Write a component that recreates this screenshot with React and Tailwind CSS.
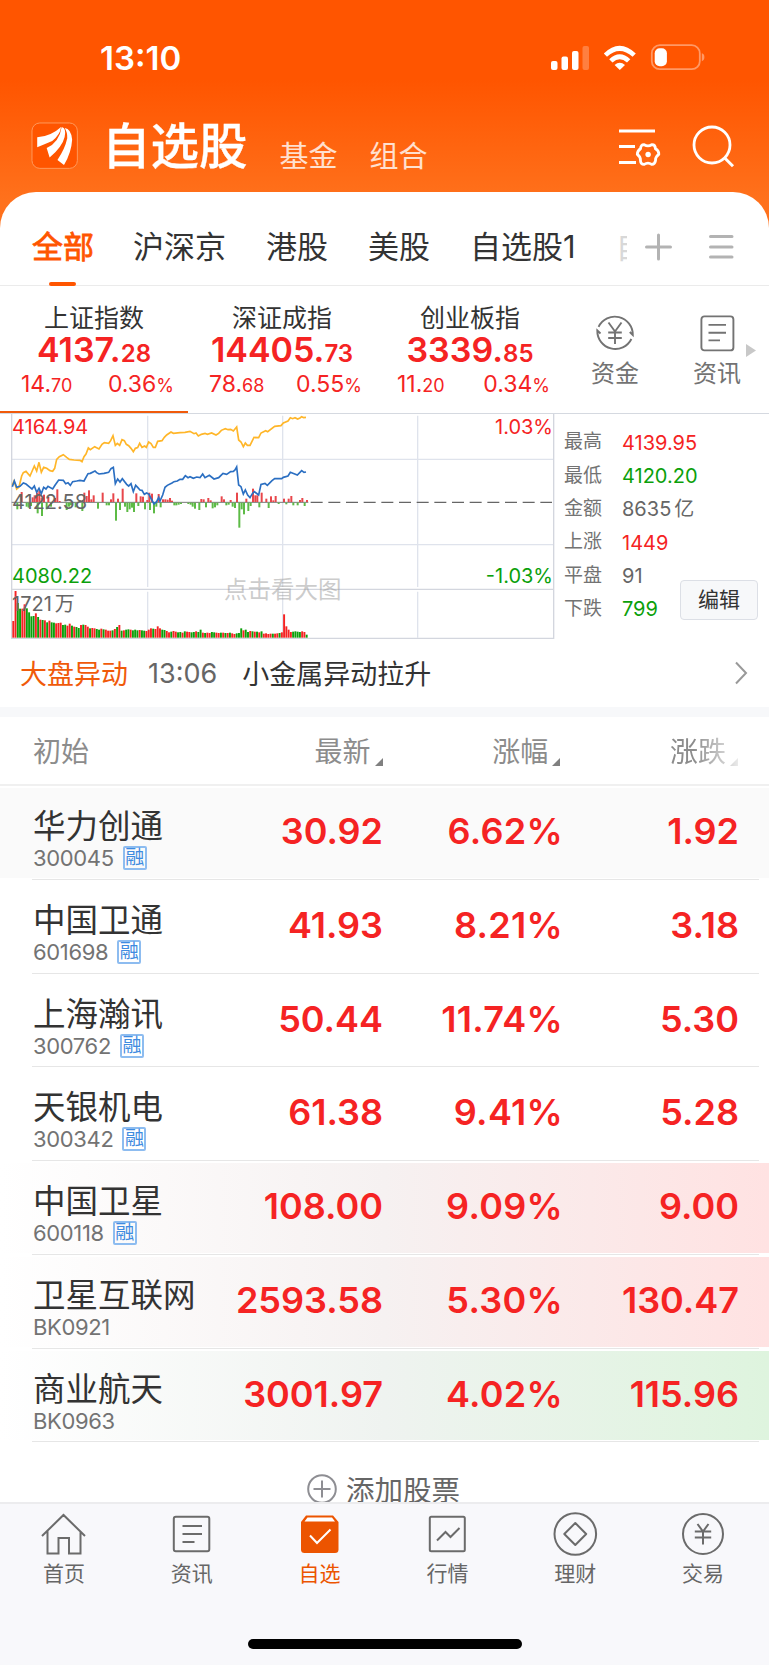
import React from "react";

// 分时图数据，坐标系与 viewBox 一致
const indexLine =
  "37,240 42,228 50,252 57,246 65,213 70,203 78,199 90,213 103,183 110,198 117,172 124,202 131,187 140,190 150,197 158,199 164,190 170,163 178,155 190,149 200,157 208,163 222,165 240,166 246,170 252,155 258,147 265,129 271,134 284,125 297,132 306,118 313,113 326,115 332,107 339,92 346,121 352,115 359,121 366,104 373,107 379,118 386,122 393,130 400,140 406,130 413,128 419,115 426,127 434,123 439,127 446,111 453,116 460,127 466,127 473,109 486,107 493,97 500,90 513,81 520,85 540,83 555,82 570,79 582,86 588,84 595,93 604,88 615,85 622,88 635,84 648,90 656,85 664,76 676,71 684,74 692,73 700,78 710,66 716,105 723,111 730,125 736,114 742,121 750,121 762,97 776,98 783,84 797,77 803,80 824,64 843,62 850,54 864,48 871,38 878,41 885,38 893,42 900,39 905,35 911,38 918,37";

const averageLine =
  "37,245 43,228 50,247 60,244 70,234 78,237 90,247 96,252 103,243 110,262 117,250 124,266 131,247 138,252 144,244 158,252 165,241 176,225 190,226 197,236 204,233 211,241 218,230 230,228 240,226 252,228 264,206 271,205 285,198 290,203 297,207 312,205 326,202 333,191 340,187 346,236 353,222 360,231 367,221 380,238 386,243 393,236 400,260 407,241 413,247 420,255 426,256 433,268 440,264 447,268 454,282 462,297 470,290 476,277 480,288 488,270 495,247 502,241 516,234 522,230 532,228 540,223 548,223 556,212 564,218 570,215 580,220 590,216 600,218 608,207 615,218 628,211 642,222 656,218 669,205 680,208 692,200 700,199 705,195 710,186 716,240 723,245 730,267 736,255 743,270 750,278 757,266 763,260 776,270 783,238 795,235 802,241 816,227 824,221 845,221 850,217 864,213 871,202 892,210 905,197 912,202 918,201";

// [x, 高度]，正数红柱，负数绿柱
const momentum = [
  [52, -20], [65, 30], [80, -12], [86, -15], [93, -10], [98, 14], [104, 20], [111, 28], [113, -32], [118, 34],
  [125, 12], [126, -40], [132, 22], [140, -20], [145, 15], [153, -12], [165, 12], [172, 38], [179, 3], [200, -22],
  [207, -12], [213, -8], [227, -14], [240, 5], [247, -25], [253, 28], [260, 18], [267, 35], [274, 8], [281, 20],
  [294, -18], [308, 28], [320, -8], [327, -8], [333, 8], [340, 26], [348, -54], [354, 10], [360, -22], [368, 40],
  [375, -12], [382, -28], [389, -20], [396, -15], [402, -28], [409, 26], [415, -10], [422, 17], [429, 16], [435, -20],
  [442, 6], [448, 28], [450, -22], [456, 25], [462, -32], [469, -12], [476, 24], [482, -14], [489, 8], [496, 8],
  [503, 7], [510, 12], [516, 4], [523, -8], [529, -8], [536, -6], [543, -4], [565, -4], [572, -6], [578, -12],
  [585, -18], [598, -22], [604, 9], [611, 8], [618, -14], [625, 12], [632, 5], [638, -17], [645, -14], [652, -8],
  [665, 17], [672, 8], [679, -8], [686, -6], [692, 6], [698, -12], [705, -16], [711, 28], [718, -75], [725, -20],
  [732, -35], [739, 10], [745, -25], [752, -10], [759, 40], [766, 20], [772, 20], [778, -14], [785, 28], [799, 10],
  [806, -16], [813, 17], [820, 5], [827, 18], [836, -4], [852, 10], [859, -5], [866, 10], [874, 18], [880, -8],
  [893, -8], [900, 6], [907, 12], [914, -10], [921, 6],
];

const volumes = [
  50, 140, -104, -87, 87, 100, -88, -76, -64, -65, 73, -62, 54, -53, 52, -46, 51, -46, -45, 43, 44, 45, -38, -39, 36, 42,
  -36, 33, -32, -29, 38, -39, 38, 33, -28, 29, 28, -26, -24, 27, -25, 24, 21, 21, -22, 26, -32, 38, -21, 22, -24, -25,
  24, -22, -24, -22, 23, -22, -21, 20, 24, 28, -27, 26, 34, 28, -24, -23, 20, 16, -18, 20, 18, -16, -17, 15, -19, 18,
  17, -16, -17, 19, -17, -24, 15, -14, 15, 14, -17, -16, 15, 14, -15, 15, -14, 14, -15, 13, 11, -13, -14, -28, 22, -24,
  -17, 20, -19, 18, -18, 16, -19, 12, 13, 11, 12, -12, 12, 13, -14, 16, 70, 34, 24, 17, -18, -19, -18, -17, 19, 17, -9,
];

const indices = [
  { name: "上证指数", value: "4137.", decimals: "28", change: "14.", changeDecimals: "70", percent: "0.36" },
  { name: "深证成指", value: "14405.", decimals: "73", change: "78.", changeDecimals: "68", percent: "0.55" },
  { name: "创业板指", value: "3339.", decimals: "85", change: "11.", changeDecimals: "20", percent: "0.34" },
];

const stats = [
  { label: "最高", value: "4139.95", color: "text-[#f52323]" },
  { label: "最低", value: "4120.20", color: "text-[#0ba00b]" },
  { label: "金额", value: "8635", unit: "亿", color: "text-[#666]" },
  { label: "上涨", value: "1449", color: "text-[#f52323]" },
  { label: "平盘", value: "91", color: "text-[#666]" },
  { label: "下跌", value: "799", color: "text-[#0ba00b]" },
];

const stocks = [
  { name: "华力创通", code: "300045", margin: true, price: "30.92", percent: "6.62%", change: "1.92", bg: "bg-[#fafafa]" },
  { name: "中国卫通", code: "601698", margin: true, price: "41.93", percent: "8.21%", change: "3.18", bg: "" },
  { name: "上海瀚讯", code: "300762", margin: true, price: "50.44", percent: "11.74%", change: "5.30", bg: "" },
  { name: "天银机电", code: "300342", margin: true, price: "61.38", percent: "9.41%", change: "5.28", bg: "" },
  { name: "中国卫星", code: "600118", margin: true, price: "108.00", percent: "9.09%", change: "9.00", bg: "bg-gradient-to-r from-white via-[#f6f1f1] via-50% to-[#ffe2e2]" },
  { name: "卫星互联网", code: "BK0921", margin: false, price: "2593.58", percent: "5.30%", change: "130.47", bg: "bg-gradient-to-r from-white via-[#f6f1f1] via-50% to-[#ffe2e2]" },
  { name: "商业航天", code: "BK0963", margin: false, price: "3001.97", percent: "4.02%", change: "115.96", bg: "bg-gradient-to-r from-white via-[#eff3f0] via-50% to-[#def4de]" },
];

const StatusBar = () => (
  <div className="flex h-[104px] items-start justify-between pl-[100px] pr-[64px] pt-[44px] text-white">
    <span className="pt-[1px] text-[33px] font-semibold leading-[26px]">13:10</span>
    <svg width="155" height="28" viewBox="0 0 155 28" className="shrink-0">
      <rect x="1" y="17" width="6.5" height="9" rx="2" fill="#fff" />
      <rect x="11.5" y="12.5" width="6.5" height="13.5" rx="2" fill="#fff" />
      <rect x="22" y="7" width="6.5" height="19" rx="2" fill="#fff" />
      <rect x="32.5" y="2" width="6.5" height="24" rx="2" fill="#fff" opacity=".25" />
      <path d="M53.8 9.6 Q69.5 -6 85.8 9.6 L82.6 12.8 Q69.5 1 57 12.8Z" fill="#fff" />
      <path d="M59.2 15.2 Q69.7 5.4 80.3 15.2 L77 18.4 Q69.7 12.2 62.5 18.4Z" fill="#fff" />
      <path d="M64.6 20.9 Q69.7 16.6 75 20.9 L69.8 26Z" fill="#fff" />
      <rect x="101.8" y="1.2" width="48" height="24" rx="8" fill="none" stroke="#fff" strokeOpacity=".4" strokeWidth="1.8" />
      <rect x="104.7" y="4.2" width="12.2" height="18" rx="5" fill="#fff" />
      <path d="M151.8 9.2 Q154.4 9.8 154.4 13.1 T151.8 17.2Z" fill="#fff" fillOpacity=".4" />
    </svg>
  </div>
);

const Header = () => (
  <div className="flex h-[88px] items-start pl-[31px] pt-[18px] text-white">
    <svg width="48" height="48" viewBox="0 0 147 147" className="shrink-0">
      <rect x="3" y="3" width="139" height="139" rx="24" fill="#ff5500" stroke="#ff9a5c" strokeWidth="3" />
      <path d="M19 47 Q62 43 92 15 Q90 37 65 58 Q44 67 19 77Z" fill="#fff" />
      <path d="M48 80 Q87 61 94 15 Q109 18 103 46 Q96 76 57 109Z" fill="#fff" />
      <path d="M81 116 Q104 83 111 50 Q112 31 103 18 Q123 20 126 54 Q124 92 101 132Z" fill="#fff" />
    </svg>
    <h1 className="ml-[23px] text-[48.5px] font-medium leading-[49px] [-webkit-text-stroke:0.3px_white]">自选股</h1>
    <span className="ml-[32px] pt-[19px] text-[29px] leading-[32px] text-white/80">基金</span>
    <span className="ml-[32px] pt-[19px] text-[29px] leading-[32px] text-white/80">组合</span>
    <svg width="130" height="50" viewBox="0 0 130 50" className="ml-auto mr-[28px] shrink-0" fill="none" stroke="#fff">
      <path d="M8 9H44M8 24.5H24M8 40.5H25" strokeWidth="3" />
      <path
        d="M33.2 22.7 Q37 25 40.7 22.7 Q44.2 22.5 44.5 26.8 Q48 28.8 47.8 32.4 Q44.2 35 44.5 38.6 Q43.7 42.5 40.7 42.3 Q37 39.8 33.2 42.3 Q29.7 42.5 29.5 38.6 Q29.7 35 26.3 32.4 Q26.3 28.8 29.5 26.8 Q29.7 22.5 33.2 22.7Z"
        strokeWidth="2.8"
        strokeLinejoin="round"
      />
      <circle cx="37.1" cy="32.5" r="2.7" fill="#fff" stroke="none" />
      <circle cx="101" cy="23" r="18" strokeWidth="2.8" />
      <path d="M113.5 35.8L122 44.3" strokeWidth="3" />
    </svg>
  </div>
);

const Tabs = () => (
  <div className="relative flex h-[94px] items-center border-b border-[#ebebeb] pl-[32px] pt-[16px] text-[31px] leading-[36px] text-[#333]">
    <span className="text-[#ff5500] [-webkit-text-stroke:0.8px_#ff5500]">全部</span>
    <span className="ml-[39px]">沪深京</span>
    <span className="ml-[40px]">港股</span>
    <span className="ml-[40px]">美股</span>
    <span className="ml-[40px] whitespace-nowrap">自选股1</span>
    <span className="ml-[40px] w-[11px] overflow-hidden whitespace-nowrap text-[#d8d8d8]">自</span>
    <svg width="90" height="28" viewBox="0 0 90 28" className="ml-auto mr-[35px] shrink-0" stroke="#b3b3b3" strokeWidth="3" strokeLinecap="round">
      <path d="M2.5 14H26.5M14.5 2V26" />
      <path d="M66.5 3.5H88M66.5 14H88M66.5 24H88" />
    </svg>
    <i className="absolute bottom-[-1px] left-[49px] h-[4px] w-[27px] rounded-sm bg-[#ff5500]" />
  </div>
);

const IndexBar = () => (
  <div className="flex h-[128px] border-b border-[#d5d9e0]">
    {indices.map((item, i) => (
      <div
        key={item.name}
        className={`flex w-[188px] flex-col items-center border-b-2 pt-[18px] text-[#f52323] ${i === 0 ? "border-[#f05a0a]" : "border-transparent"}`}
      >
        <span className="text-[25px] leading-[28px] text-[#333]">{item.name}</span>
        <span className="mt-[1px] text-[34px] font-semibold leading-[34px]">
          {item.value}
          <span className="text-[24px]">{item.decimals}</span>
        </span>
        <span className="flex w-full justify-between pl-[21px] pr-[14px] text-[23px] leading-[26px]">
          <span>
            {item.change}
            <span className="text-[18px]">{item.changeDecimals}</span>
          </span>
          <span>
            {item.percent}
            <span className="text-[18px]">%</span>
          </span>
        </span>
      </div>
    ))}
    <div className="flex w-[102px] flex-col items-center pt-[27px] text-[24px] text-[#737373]">
      <svg width="40" height="40" viewBox="0 0 40 40" fill="none" stroke="#737373" strokeWidth="1.9">
        <path d="M3.6 13.8 A18 18 0 0 1 37.8 22 L34.8 19M36.4 26 A18 18 0 0 1 2.3 17.5 L5.5 20.5" />
        <path d="M13.5 9.5L20 18.5L26.5 9.5M20 18.5V31M13.2 19.5H26.8M13.2 25H26.8" />
      </svg>
      <span className="mt-[4px] leading-[34px]">资金</span>
    </div>
    <div className="flex flex-1 items-start pl-[27px] text-[#737373]">
      <div className="flex w-[48px] flex-col items-center pt-[27px] text-[24px]">
        <svg width="40" height="40" viewBox="0 0 40 40" fill="none" stroke="#737373" strokeWidth="1.9">
          <rect x="4.4" y="3.4" width="32" height="34" rx="3" />
          <path d="M11.5 11.9H29M11.5 19.7H29M11.5 27.4H23" />
        </svg>
        <span className="mt-[4px] whitespace-nowrap leading-[34px]">资讯</span>
      </div>
      <svg width="10" height="13" viewBox="0 0 10 13" className="ml-[5px] mt-[58px]">
        <path d="M0 0L10 6.5L0 13Z" fill="#c8c8c8" />
      </svg>
    </div>
  </div>
);

const TrendChart = () => (
  <div className="relative h-[226px] w-[555px] shrink-0 text-[20px] leading-[20px]">
    <svg width="555" height="226" viewBox="0 27 1665 678" className="block">
      <g fill="none" stroke="#dfe3ec" strokeWidth="4">
        <path d="M35 163H1661M35 419H1661M443 32V546M848 32V546M1253 32V546M443 560V698M848 560V698M1253 560V698" />
        <path d="M35 27V700H1661V27M35 553H1661" stroke="#d3d6de" />
      </g>
      <path d="M35 292H925" stroke="#777" strokeWidth="3" />
      <path d="M932 292H1656" stroke="#666" strokeWidth="4" strokeDasharray="36 17" />
      {momentum.map(([x, h], i) => (
        <rect key={i} x={x - 3} y={h > 0 ? 291 - h : 293} width="6" height={Math.abs(h)} fill={h > 0 ? "#e8474b" : "#5dbb46"} />
      ))}
      {volumes.map((v, i) => (
        <rect key={i} x={37 + i * 6.77} y={698 - Math.abs(v)} width="5.8" height={Math.abs(v)} fill={v > 0 ? "#f52323" : "#0ba00b"} />
      ))}
      <polyline points={indexLine} fill="none" stroke="#ffb629" strokeWidth="5" />
      <polyline points={averageLine} fill="none" stroke="#2b6fc2" strokeWidth="5" />
    </svg>
    <span className="absolute left-[12px] top-[3px] text-[#f52323]">4164.94</span>
    <span className="absolute left-[12px] top-[78px] text-[#666]">4122.58</span>
    <span className="absolute left-[12px] top-[152px] text-[#0ba00b]">4080.22</span>
    <span className="absolute left-[12px] top-[180px] text-[#666]">
      1721<span className="ml-[3px]">万</span>
    </span>
    <span className="absolute right-[2px] top-[3px] text-[#f52323]">1.03%</span>
    <span className="absolute right-[2px] top-[152px] text-[#0ba00b]">-1.03%</span>
    <span className="absolute left-[224px] top-[163px] text-[23.5px] leading-[26px] text-[#999]/50">点击看大图</span>
  </div>
);

const MarketPanel = () => (
  <div className="flex">
    <TrendChart />
    <div className="relative flex flex-1 flex-col pl-[9px] pt-[12px]">
      {stats.map((s) => (
        <div key={s.label} className="flex h-[33.3px] items-center text-[19px]">
          <span className="w-[58px] text-[#737373]">{s.label}</span>
          <span className={`text-[20px] ${s.color}`}>
            {s.value}
            {s.unit && <span className="ml-[3px]">{s.unit}</span>}
          </span>
        </div>
      ))}
      <button className="absolute right-[11px] top-[166px] h-[40px] w-[78px] rounded-[4px] border border-[#dcdfe6] bg-[#f7f8fa] text-[21px] leading-[36px] text-[#333]">
        编辑
      </button>
    </div>
  </div>
);

const NewsRow = () => (
  <div className="flex h-[67px] items-center pl-[20px] pr-[21px] text-[27px]">
    <span className="pt-[3px] text-[#f05a0a]">大盘异动</span>
    <span className="ml-[20px] pt-[2px] text-[#666]">13:06</span>
    <span className="ml-[25px] pt-[4px] text-[#333]">小金属异动拉升</span>
    <svg width="14" height="24" viewBox="0 0 14 24" className="mb-[2px] ml-auto" fill="none" stroke="#999" strokeWidth="2">
      <path d="M2 1.5L12 12L2 22.5" />
    </svg>
  </div>
);

const SortArrow = () => (
  <svg width="8" height="8" viewBox="0 0 8 8" className="mb-[3px] ml-[4px]">
    <path d="M8 0V8H0Z" fill="#808080" />
  </svg>
);

const TableHead = () => (
  <div className="flex h-[69px] items-center border-b-2 border-[#f0f0f0] pl-[33px] pr-[31px] pt-[2px] text-[28px] leading-[34px] text-[#8c8c8c]">
    <span className="w-[173px]">初始</span>
    <span className="flex w-[177px] items-end justify-end">最新<SortArrow /></span>
    <span className="flex w-[178px] items-end justify-end">涨幅<SortArrow /></span>
    <span className="flex w-[178px] items-end justify-end [mask-image:linear-gradient(to_right,black_75%,transparent_105%)]">涨跌<SortArrow /></span>
  </div>
);

const StockRow = ({ stock }) => (
  <div className="relative h-[93.75px] pb-[2px] pt-[2px]">
    <div className={`flex h-full pl-[33px] ${stock.bg}`}>
      <div className="w-[173px] pt-[19px]">
        <p className="whitespace-nowrap text-[32.5px] leading-[40px] text-[#333]">{stock.name}</p>
        <p className="-mt-[2px] flex items-center text-[22px] leading-[26px] tracking-[-0.35px] text-[#737373]">
          {stock.code}
          {stock.margin && (
            <span className="ml-[9px] flex h-[24px] w-[24px] items-center justify-center rounded-[2px] border-2 border-[#8dbcf0] text-[19px] tracking-normal text-[#3f8be0]">
              融
            </span>
          )}
        </p>
      </div>
      <div className="flex pt-[24px] text-right text-[36px] font-semibold leading-[38px] text-[#f52323]">
        <span className="w-[177px]">{stock.price}</span>
        <span className="w-[180px] tracking-[0.3px]">{stock.percent}</span>
        <span className="w-[176px]">{stock.change}</span>
      </div>
    </div>
    <i className="absolute bottom-0 left-[32px] right-[10px] h-px bg-[#e6e6e6]" />
  </div>
);

const AddStock = () => (
  <div className="flex h-[60px] items-start justify-center overflow-hidden pr-[2px] pt-[32px] text-[28.5px] leading-[34px] text-[#666]">
    <svg width="30" height="30" viewBox="0 0 30 30" className="mr-[9px]" fill="none" stroke="#8e8e93" strokeWidth="2">
      <circle cx="15" cy="15" r="13.8" />
      <path d="M6.5 15H23.5M15 6.5V23.5" />
    </svg>
    添加股票
  </div>
);

const navItems = [
  {
    label: "首页",
    icon: <path d="M1 24L22.5 3L44 24M6.5 19V41.5H17.5V26H28V41.5H39.5V19" />,
  },
  {
    label: "资讯",
    icon: (
      <>
        <rect x="4.8" y="4.8" width="35.5" height="34.5" rx="2" />
        <path d="M13.5 14H33M13.5 22H33M13.5 30H25.5" />
      </>
    ),
  },
  {
    label: "自选",
    active: true,
    icon: (
      <>
        <path d="M4 10L9 3.5H36L41.5 10V37.5Q41.5 41 38 41H7.5Q4 41 4 37.5Z" fill="#ec5400" stroke="none" />
        <path d="M10.5 5.5H35L38 9.5H7.5Z" fill="#fff" stroke="none" />
        <path d="M13 23.5L20 31L33.5 17.5" stroke="#fff" />
      </>
    ),
  },
  {
    label: "行情",
    icon: (
      <>
        <rect x="4.8" y="4.8" width="35" height="34.5" rx="1.5" />
        <path d="M12 28.5L20.5 20L25.5 25L34.5 16" />
      </>
    ),
  },
  {
    label: "理财",
    icon: (
      <>
        <circle cx="22.3" cy="22" r="20.8" />
        <path d="M22.3 11L33.2 22L22.3 33L11.3 22Z" strokeLinejoin="round" />
      </>
    ),
  },
  {
    label: "交易",
    icon: (
      <>
        <circle cx="22" cy="22" r="20" />
        <path d="M16.5 12L22 19.5L27.5 12M22 19.5V32.5M13.8 19.5H30.2M13.8 25.5H30.2" />
      </>
    ),
  },
];

const BottomNav = () => (
  <nav className="flex flex-1 flex-col border-t-2 border-[#ececee] bg-[#f8f8fb]">
    <div className="flex pr-[2px]">
      {navItems.map((item) => (
        <div key={item.label} className="flex flex-1 flex-col items-center pt-[8px]">
          <svg width="45" height="44" viewBox="0 0 45 44" fill="none" stroke="#6b6b6b" strokeWidth="2">
            {item.icon}
          </svg>
          <span className={`mt-[4px] text-[21px] leading-[28px] ${item.active ? "text-[#ec5400]" : "text-[#666]"}`}>{item.label}</span>
        </div>
      ))}
    </div>
    <div className="mx-auto mb-[16px] mt-auto h-[10px] w-[274px] rounded-full bg-black" />
  </nav>
);

const App = () => (
  <div className="flex h-[1665px] w-[769px] flex-col overflow-hidden bg-white bg-[linear-gradient(to_bottom,#ff5500_80px,#ff711c_200px,#ff711c_240px,#fff_240px)] font-['Inter','Noto_Sans_CJK_SC',sans-serif]">
    <StatusBar />
    <Header />
    <div className="rounded-t-[36px] bg-white">
      <Tabs />
      <IndexBar />
      <MarketPanel />
      <NewsRow />
      <div className="h-[10px] bg-[#f7f8fa]" />
      <TableHead />
      {stocks.map((stock) => (
        <StockRow key={stock.code} stock={stock} />
      ))}
      <AddStock />
    </div>
    <BottomNav />
  </div>
);

export default App;
